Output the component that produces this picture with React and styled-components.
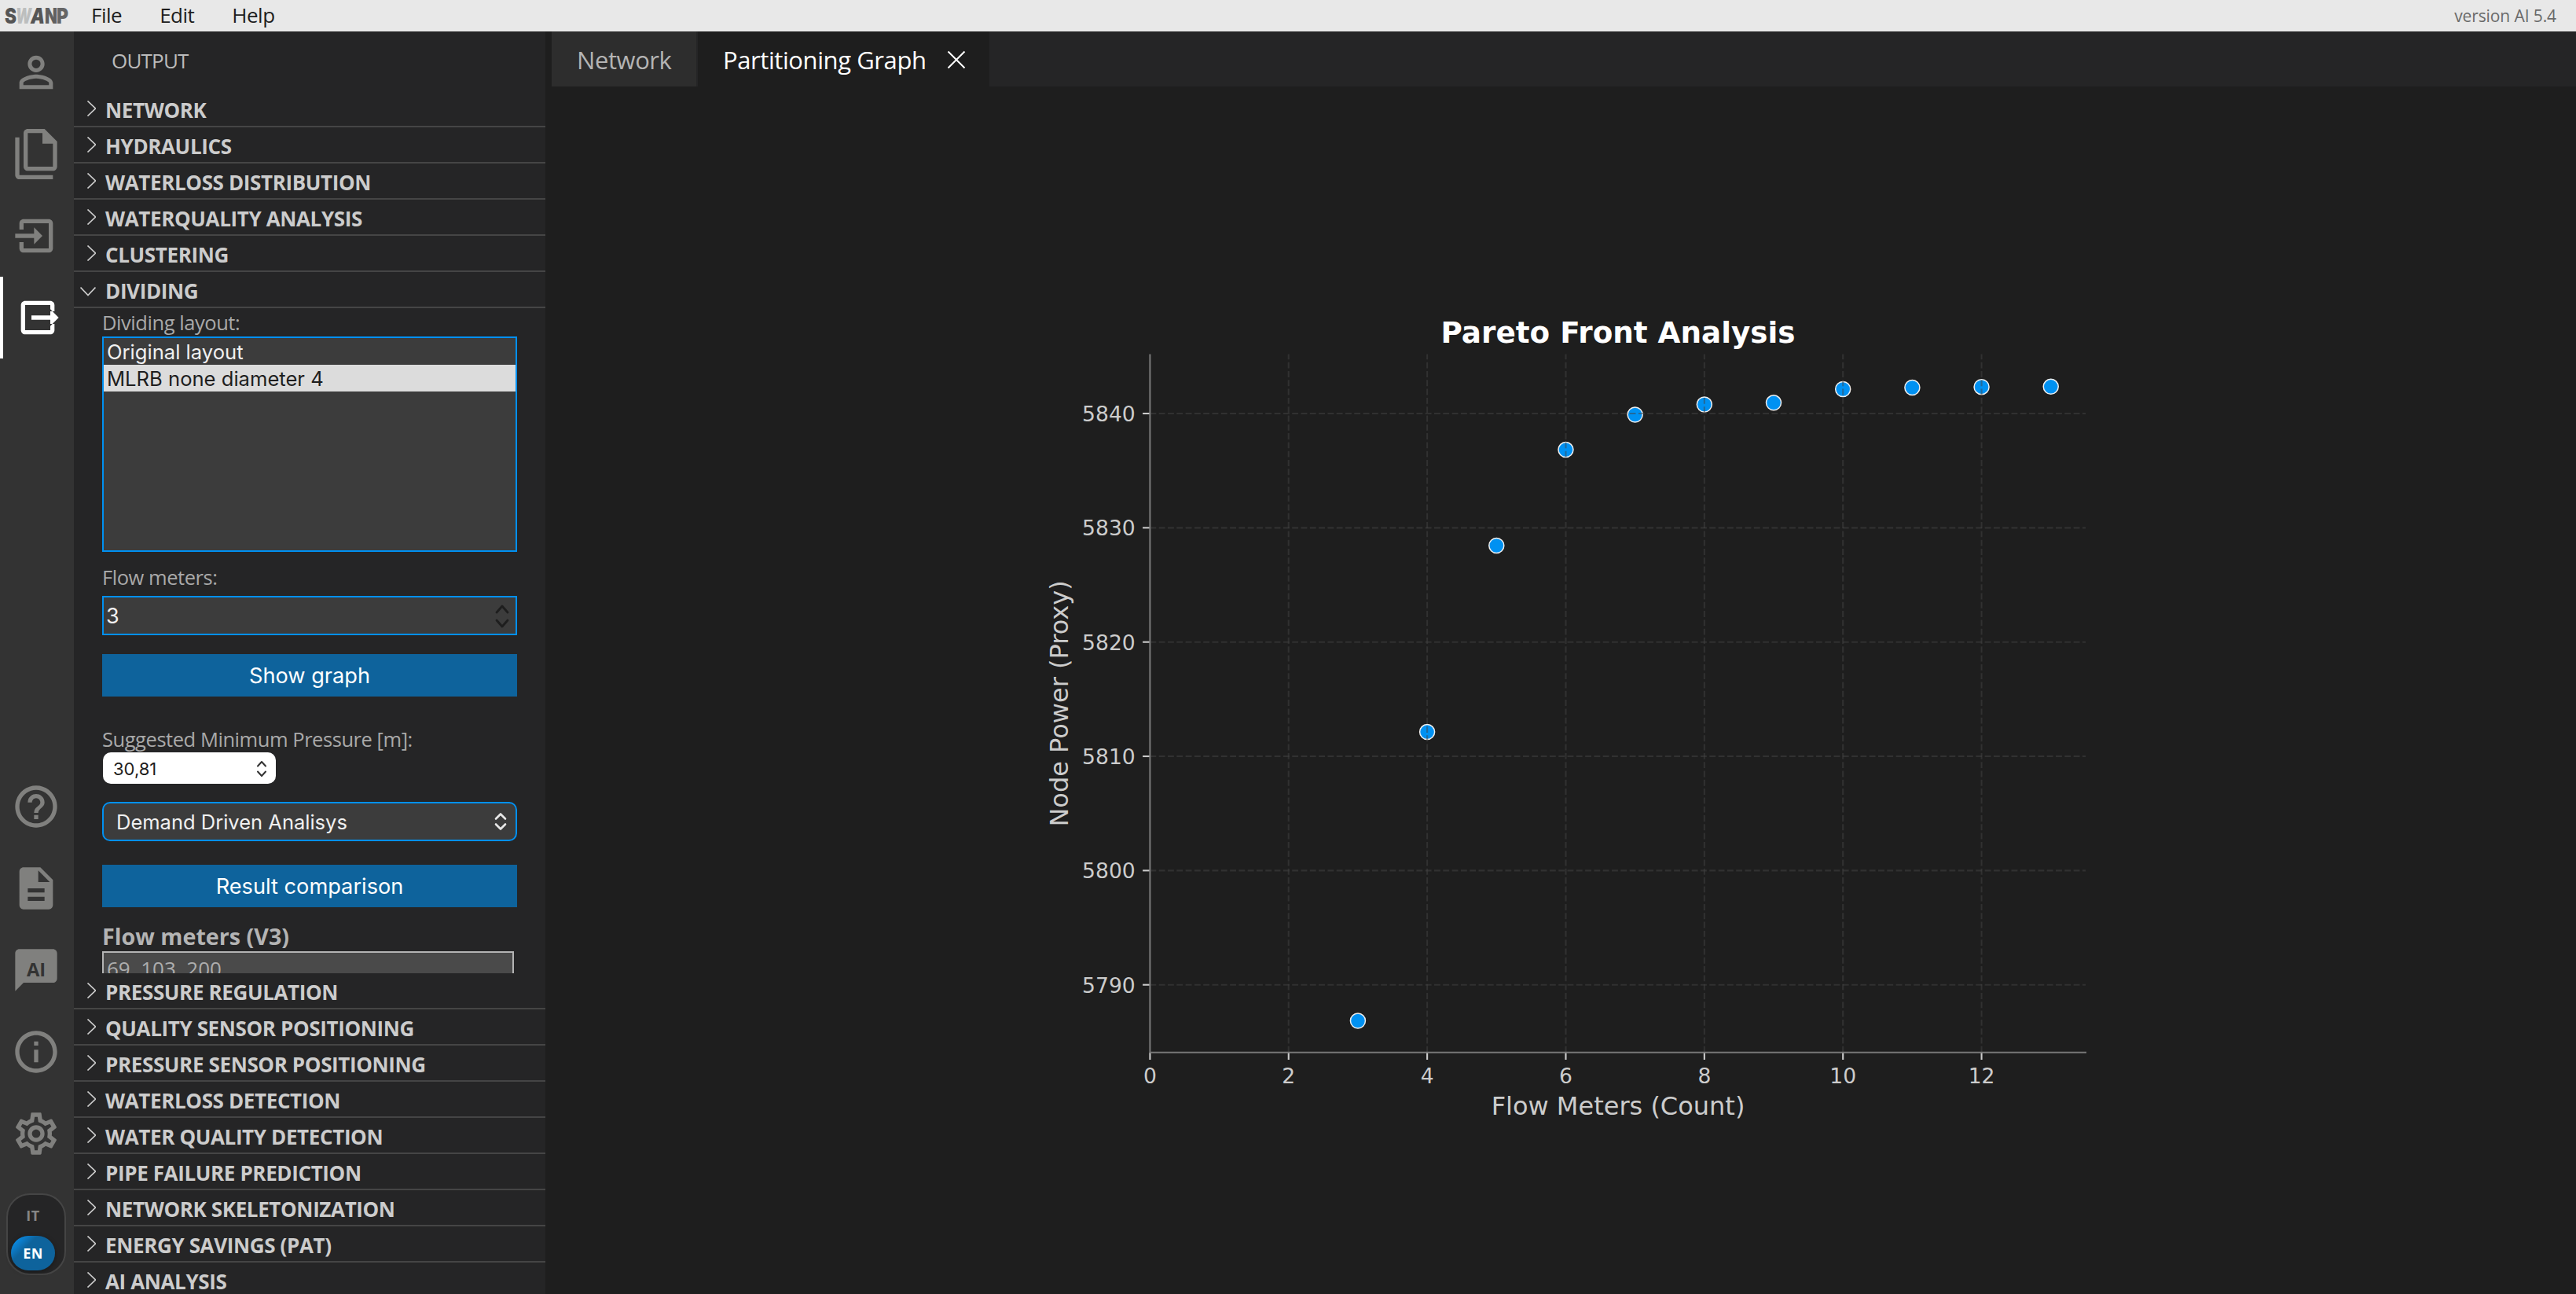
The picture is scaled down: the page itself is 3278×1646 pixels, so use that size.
import React, { useState } from "react";
import styled, { createGlobalStyle, css } from "styled-components";

const UI_FONT = `"Open Sans", "Noto Sans", sans-serif`;
const SYSTEM_FONT = `Inter, "Liberation Sans", sans-serif`;

const GlobalStyle = createGlobalStyle`
  * {
    box-sizing: border-box;
  }

  body {
    margin: 0;
    overflow: hidden;
    background: #1e1e1e;
    font-family: ${UI_FONT};
    font-size: 26px;
    color: #cccccc;
  }
`;

const Page = styled.div`
  display: flex;
  flex-direction: column;
  height: 100vh;
`;

const MenuBar = styled.header`
  display: flex;
  align-items: center;
  flex: none;
  height: 40px;
  padding: 0 25px 0 6px;
  background: #e8e8e8;
  color: #1e1e1e;
`;

const Menu = styled.nav`
  display: flex;
  gap: 48px;
  margin-left: 28px;
  padding-bottom: 2px;
  line-height: 38px;
  letter-spacing: -0.5px;
`;

const Version = styled.span`
  margin-left: auto;
  padding-bottom: 1px;
  font-size: 21px;
  line-height: 38px;
  letter-spacing: -0.1px;
  color: #6a6a6a;
`;

const LogoSvg = styled.svg`
  flex: none;
  width: 82px;
  height: 36px;
  overflow: visible;
  font-family: ${SYSTEM_FONT};
  font-size: 27px;
  font-weight: 900;
`;

const Body = styled.div`
  display: flex;
  flex: 1;
  min-height: 0;
`;

const ActivityBar = styled.aside`
  display: flex;
  flex-direction: column;
  justify-content: space-between;
  width: 94px;
  background: #333333;
`;

const ActivityItem = styled.div`
  display: flex;
  align-items: center;
  justify-content: center;
  height: 104px;
  padding-right: 2px;
  color: #80807e;

  svg {
    width: 64px;
    height: 64px;
    fill: currentColor;
  }

  text {
    fill: #333333;
    font-size: 8.9px;
    font-weight: 700;
    text-anchor: middle;
  }

  ${({ $active }) =>
    $active &&
    css`
      color: #fff;
      border-left: 4px solid #fff;
    `}
`;

const LangSwitch = styled.div`
  display: flex;
  flex-direction: column;
  justify-content: space-between;
  width: 76px;
  height: 104px;
  margin: 24px 0 24px 8px;
  padding: 4px 12px 4px 4px;
  border: 2px solid #454545;
  border-radius: 30px;
  background: #252526;
`;

const Lang = styled.span`
  height: 44px;
  border-radius: 22px;
  font-size: 18px;
  font-weight: 700;
  line-height: 45px;
  letter-spacing: 0.5px;
  text-align: center;
  color: #858585;

  ${({ $active }) =>
    $active &&
    css`
      background: linear-gradient(135deg, #0a90ee 8%, #0e639c 34%);
      box-shadow: 0 2px 6px rgba(0, 0, 0, 0.35);
      color: #fff;
    `}
`;

const SideBar = styled.section`
  display: flex;
  flex-direction: column;
  width: 600px;
  overflow: hidden;
  background: #252526;
`;

const SideTitle = styled.div`
  flex: none;
  height: 76px;
  padding-left: 48px;
  line-height: 75px;
  letter-spacing: -0.8px;
  color: #bbbbbb;
`;

const SectionHeader = styled.div`
  display: flex;
  align-items: center;
  flex: none;
  height: 46px;
  padding: 3px 0 0 8px;
  border-bottom: 2px solid #454545;
  font-weight: 700;
  white-space: nowrap;
  letter-spacing: -0.37px;

  svg {
    width: 20px;
    height: 20px;
    margin: 0 12px 3px 0;
    fill: none;
    stroke: #cccccc;
    stroke-width: 1.7;
  }
`;

const SectionBody = styled.div`
  display: flex;
  flex-direction: column;
  flex: none;
  height: 846px;
  padding: 0 36px;
  overflow: hidden;
`;

const Label = styled.label`
  flex: none;
  height: 36px;
  margin-top: ${({ $top }) => $top || 0}px;
  font-size: 25.5px;
  line-height: 36px;
  letter-spacing: -0.45px;
  color: #a9a9a9;
`;

const field = css`
  flex: none;
  border: 2px solid #0090f1;
  background: #3c3c3c;
  color: #f0f0f0;
  font-family: ${SYSTEM_FONT};
`;

const ListBox = styled.div`
  ${field}
  height: 274px;
`;

const Option = styled.div`
  height: 34px;
  padding-left: 4px;
  line-height: 35px;
  font-size: 25.6px;
  cursor: pointer;
  background: ${({ $selected }) => ($selected ? "#dcdcdc" : "transparent")};
  color: ${({ $selected }) => ($selected ? "#1e1e1e" : "#f0f0f0")};
`;

const NumberField = styled.div`
  ${field}
  display: flex;
  align-items: center;
  justify-content: space-between;
  height: 50px;
  margin-top: 6px;
  padding: 1px 7px 0 3px;
  font-size: 27px;
`;

const PressureField = styled.div`
  display: flex;
  align-items: center;
  justify-content: space-between;
  flex: none;
  width: 220px;
  height: 40px;
  margin: -1px 0 0 1px;
  padding: 1px 8px 0 13px;
  border-radius: 10px;
  background: #fff;
  color: #1e1e1e;
  font-family: ${SYSTEM_FONT};
  font-size: 22px;
`;

const SelectField = styled.div`
  ${field}
  display: flex;
  align-items: center;
  justify-content: space-between;
  height: 50px;
  margin-top: 23px;
  padding: 0 10px 0 16px;
  border-radius: 10px;
  font-size: 25.5px;
`;

const Spinner = styled.svg`
  flex: none;
  fill: none;
  stroke: ${({ $color }) => $color};
  stroke-width: ${({ $weight }) => $weight};
  stroke-linecap: round;
  stroke-linejoin: round;
`;

const Button = styled.button`
  flex: none;
  height: 54px;
  margin-top: ${({ $top }) => $top}px;
  padding: 0;
  border: none;
  background: #0e639c;
  color: #fff;
  font-family: ${SYSTEM_FONT};
  font-size: 27.2px;
  cursor: pointer;
`;

const Heading = styled.h4`
  flex: none;
  height: 38px;
  margin: 18px 0 0;
  font-size: 28.7px;
  line-height: 38px;
  color: #b4b4b4;
`;

const MetersBox = styled.div`
  flex: none;
  height: 90px;
  margin-right: 4px;
  padding: 2px 4px;
  border: 2px solid #b4b4b4;
  background: #4a4a4a;
  line-height: 36px;
  color: #adadad;
`;

const Main = styled.main`
  display: flex;
  flex-direction: column;
  flex: 1;
  padding-left: 8px;
`;

const Tabs = styled.div`
  display: flex;
  flex: none;
  height: 70px;
  background: #252526;
`;

const Tab = styled.div`
  display: flex;
  align-items: center;
  width: ${({ $width }) => $width}px;
  padding: 1px 0 0 32px;
  border-right: 2px solid #252526;
  font-size: 31px;
  letter-spacing: -0.42px;
  white-space: nowrap;
  background: ${({ $active }) => ($active ? "#1e1e1e" : "#2d2d2d")};
  color: ${({ $active }) => ($active ? "#fff" : "#b4b4b4")};

  svg {
    margin-left: auto;
    margin-right: 30px;
    fill: none;
    stroke: #fff;
    stroke-width: 2;
  }
`;

const Chart = styled.svg`
  display: block;
  width: 2576px;
  height: 1536px;
  font-family: "DejaVu Sans", sans-serif;
`;

const topIcons = [
  {
    id: "user",
    d: "M12 5.9a2.1 2.1 0 1 1 0 4.2 2.1 2.1 0 0 1 0-4.2m0 9c2.97 0 6.1 1.46 6.1 2.1v1.1H5.9V17c0-.64 3.13-2.1 6.1-2.1M12 4C9.79 4 8 5.79 8 8s1.79 4 4 4 4-1.79 4-4-1.79-4-4-4zm0 9c-2.67 0-8 1.34-8 4v3h16v-3c0-2.66-5.33-4-8-4z",
  },
  {
    id: "files",
    d: "M16 0H8C6.9 0 6 .9 6 2v16c0 1.1.9 2 2 2h12c1.1 0 2-.9 2-2V6l-6-6m4 18H8V2h7v5h5v11M4 4v18h16v2H4c-1.1 0-2-.9-2-2V4h2z",
  },
  {
    id: "input",
    d: "M15 12l-4-4v3H2v2h9v3M20 18V6c0-1.1-.9-2-2-2H6c-1.1 0-2 .9-2 2v3h2V6h12v12H6v-3H4v3c0 1.1.9 2 2 2h12c1.1 0 2-.9 2-2z",
  },
  {
    id: "output",
    active: true,
    d: "M22 12l-4-4v3H9v2h9v3M20 18c0 1.1-.9 2-2 2H6c-1.1 0-2-.9-2-2V6c0-1.1.9-2 2-2h12c1.1 0 2 .9 2 2v3h-2V6H6v12h12v-3h2v3z",
  },
];

const bottomIcons = [
  {
    id: "help",
    d: "M11 18h2v-2h-2v2zm1-16C6.48 2 2 6.48 2 12s4.48 10 10 10 10-4.48 10-10S17.52 2 12 2zm0 18c-4.41 0-8-3.59-8-8s3.59-8 8-8 8 3.59 8 8-3.59 8-8 8zm0-14c-2.21 0-4 1.79-4 4h2c0-1.1.9-2 2-2s2 .9 2 2c0 2-3 1.75-3 5h2c0-2.25 3-2.5 3-5 0-2.21-1.79-4-4-4z",
  },
  {
    id: "document",
    d: "M14 2H6c-1.1 0-2 .9-2 2v16c0 1.1.9 2 2 2h12c1.1 0 2-.9 2-2V8l-6-6zm2 16H8v-2h8v2zm0-4H8v-2h8v2zm-3-5V3.5L18.5 9H13z",
  },
  {
    id: "ai",
    label: "AI",
    d: "M20 2H4c-1.1 0-2 .9-2 2v18l4-4h14c1.1 0 2-.9 2-2V4c0-1.1-.9-2-2-2z",
  },
  {
    id: "info",
    d: "M11 7h2v2h-2zm0 4h2v6h-2zm1-9C6.48 2 2 6.48 2 12s4.48 10 10 10 10-4.48 10-10S17.52 2 12 2zm0 18c-4.41 0-8-3.59-8-8s3.59-8 8-8 8 3.59 8 8-3.59 8-8 8z",
  },
  {
    id: "settings",
    d: "M19.43 12.98c.04-.32.07-.64.07-.98 0-.34-.03-.66-.07-.98l2.11-1.65c.19-.15.24-.42.12-.64l-2-3.46c-.09-.16-.26-.25-.44-.25-.06 0-.12.01-.17.03l-2.49 1c-.52-.4-1.08-.73-1.69-.98l-.38-2.65C14.46 2.18 14.25 2 14 2h-4c-.25 0-.46.18-.49.42l-.38 2.65c-.61.25-1.17.59-1.69.98l-2.49-1c-.06-.02-.12-.03-.18-.03-.17 0-.34.09-.43.25l-2 3.46c-.13.22-.07.49.12.64l2.11 1.65c-.04.32-.07.65-.07.98 0 .33.03.66.07.98l-2.11 1.65c-.19.15-.24.42-.12.64l2 3.46c.09.16.26.25.44.25.06 0 .12-.01.17-.03l2.49-1c.52.4 1.08.73 1.69.98l.38 2.65c.03.24.24.42.49.42h4c.25 0 .46-.18.49-.42l.38-2.65c.61-.25 1.17-.59 1.69-.98l2.49 1c.06.02.12.03.18.03.17 0 .34-.09.43-.25l2-3.46c.12-.22.07-.49-.12-.64l-2.11-1.65zm-1.98-1.71c.04.31.05.52.05.73 0 .21-.02.43-.05.73l-.14 1.13.89.7 1.08.84-.7 1.21-1.27-.51-1.04-.42-.9.68c-.43.32-.84.56-1.25.73l-1.06.43-.16 1.13-.2 1.35h-1.4l-.19-1.35-.16-1.13-1.06-.43c-.43-.18-.83-.41-1.23-.71l-.91-.7-1.06.43-1.27.51-.7-1.21 1.08-.84.89-.7-.14-1.13c-.03-.31-.05-.54-.05-.74s.02-.43.05-.73l.14-1.13-.89-.7-1.08-.84.7-1.21 1.27.51 1.04.42.9-.68c.43-.32.84-.56 1.25-.73l1.06-.43.16-1.13.2-1.35h1.39l.19 1.35.16 1.13 1.06.43c.43.18.83.41 1.23.71l.91.7 1.06-.43 1.27-.51.7 1.21-1.07.85-.89.7.14 1.13zM12 8c-2.21 0-4 1.79-4 4s1.79 4 4 4 4-1.79 4-4-1.79-4-4-4zm0 6c-1.1 0-2-.9-2-2s.9-2 2-2 2 .9 2 2-.9 2-2 2z",
  },
];

const sectionsAbove = ["NETWORK", "HYDRAULICS", "WATERLOSS DISTRIBUTION", "WATERQUALITY ANALYSIS", "CLUSTERING"];

const sectionsBelow = [
  "PRESSURE REGULATION",
  "QUALITY SENSOR POSITIONING",
  "PRESSURE SENSOR POSITIONING",
  "WATERLOSS DETECTION",
  "WATER QUALITY DETECTION",
  "PIPE FAILURE PREDICTION",
  "NETWORK SKELETONIZATION",
  "ENERGY SAVINGS (PAT)",
  "AI ANALYSIS",
];

const layouts = ["Original layout", "MLRB none diameter 4"];

// [flow meters, node power]
const pareto = [
  [3, 5786.85],
  [4, 5812.13],
  [5, 5828.44],
  [6, 5836.83],
  [7, 5839.9],
  [8, 5840.79],
  [9, 5840.94],
  [10, 5842.13],
  [11, 5842.27],
  [12, 5842.33],
  [13, 5842.35],
];

const xTicks = [0, 2, 4, 6, 8, 10, 12];
const yTicks = [5790, 5800, 5810, 5820, 5830, 5840];

const LEFT = 761.4;
const RIGHT = 1952;
const TOP = 340.5;
const BOTTOM = 1228.7;

const xPos = (v) => LEFT + v * 88.18;
const yPos = (v) => 416 + (5840 - v) * 14.534;

const ActivityIcon = ({ icon }) => (
  <ActivityItem $active={icon.active}>
    <svg viewBox="0 0 24 24">
      <path d={icon.d} />
      {icon.label && (
        <text x="12" y="15.1">
          {icon.label}
        </text>
      )}
    </svg>
  </ActivityItem>
);

const Section = ({ title, open }) => (
  <SectionHeader>
    <svg viewBox="0 0 20 20">
      <path d={open ? "M0.5 7.5L10 17.5L19.5 7.5" : "M9.5 0.5L19.5 10L9.5 19.5"} />
    </svg>
    {title}
  </SectionHeader>
);

const logoLetters = [
  { char: "S", x: 0, width: 15, fill: "#555" },
  { char: "W", x: 14, width: 20, fill: "#bcbebe", italic: true },
  { char: "A", x: 33, width: 18, fill: "#555", italic: true },
  { char: "N", x: 51, width: 16, fill: "#606060" },
  { char: "P", x: 66, width: 15, fill: "#666" },
];

const Logo = () => (
  <LogoSvg viewBox="0 0 82 36">
    {logoLetters.map(({ char, x, width, fill, italic }) => (
      <text
        key={char}
        x={x}
        y="27.5"
        textLength={width}
        lengthAdjust="spacingAndGlyphs"
        fill={fill}
        fontStyle={italic ? "italic" : "normal"}
      >
        {char}
      </text>
    ))}
  </LogoSvg>
);

const ParetoChart = () => (
  <Chart viewBox="0 0 2576 1536">
    {pareto.map(([x, y]) => (
      <circle key={x} cx={xPos(x)} cy={yPos(y)} r="9.5" fill="#0091f2" stroke="#f0f0f0" strokeWidth="1.5" />
    ))}

    <g stroke="#444" strokeOpacity="0.5" strokeWidth="2.1" strokeDasharray="7.9 3.4">
      {xTicks.slice(1).map((t) => (
        <line key={t} x1={xPos(t)} x2={xPos(t)} y1={BOTTOM} y2={TOP} />
      ))}
      {yTicks.map((t) => (
        <line key={t} x1={LEFT} x2={RIGHT} y1={yPos(t)} y2={yPos(t)} />
      ))}
    </g>

    <g stroke="#ccc" strokeWidth="2.1">
      {xTicks.map((t) => (
        <line key={t} x1={xPos(t)} x2={xPos(t)} y1={BOTTOM} y2={BOTTOM + 9.3} />
      ))}
      {yTicks.map((t) => (
        <line key={t} x1={LEFT - 9.3} x2={LEFT} y1={yPos(t)} y2={yPos(t)} />
      ))}
    </g>

    <path d={`M${LEFT} ${TOP}V${BOTTOM}H${RIGHT + 1}`} fill="none" stroke="#777" strokeWidth="2.1" />

    <g fill="#ccc" fontSize="26.6">
      {xTicks.map((t) => (
        <text key={t} x={xPos(t)} y="1267.7" textAnchor="middle">
          {t}
        </text>
      ))}
      {yTicks.map((t) => (
        <text key={t} x={LEFT - 18.6} y={yPos(t) + 10} textAnchor="end">
          {t}
        </text>
      ))}
    </g>

    <g fill="#ccc" fontSize="32" textAnchor="middle">
      <text x="1357" y="1307.7">
        Flow Meters (Count)
      </text>
      <text transform="translate(657.3 785) rotate(-90)">Node Power (Proxy)</text>
    </g>
    <text x="1357" y="325.5" fill="#fff" fontSize="37.3" fontWeight="700" textAnchor="middle">
      Pareto Front Analysis
    </text>
  </Chart>
);

const App = () => {
  const [layout, setLayout] = useState(layouts[1]);

  return (
    <>
      <GlobalStyle />
      <Page>
        <MenuBar>
          <Logo />
          <Menu>
            <span>File</span>
            <span>Edit</span>
            <span>Help</span>
          </Menu>
          <Version>version AI 5.4</Version>
        </MenuBar>

        <Body>
          <ActivityBar>
            <div>
              {topIcons.map((icon) => (
                <ActivityIcon key={icon.id} icon={icon} />
              ))}
            </div>
            <div>
              {bottomIcons.map((icon) => (
                <ActivityIcon key={icon.id} icon={icon} />
              ))}
              <LangSwitch>
                <Lang>IT</Lang>
                <Lang $active>EN</Lang>
              </LangSwitch>
            </div>
          </ActivityBar>

          <SideBar>
            <SideTitle>OUTPUT</SideTitle>
            {sectionsAbove.map((title) => (
              <Section key={title} title={title} />
            ))}
            <Section title="DIVIDING" open />
            <SectionBody>
              <Label>Dividing layout:</Label>
              <ListBox>
                {layouts.map((name) => (
                  <Option key={name} $selected={name === layout} onClick={() => setLayout(name)}>
                    {name}
                  </Option>
                ))}
              </ListBox>

              <Label $top={14}>Flow meters:</Label>
              <NumberField>
                3
                <Spinner $color="#1e1e1e" $weight={2.8} width="20" height="32" viewBox="0 0 20 32">
                  <path d="M3 11L10 3L17 11M3 21L10 29L17 21" />
                </Spinner>
              </NumberField>
              <Button $top={24}>Show graph</Button>

              <Label $top={36}>Suggested Minimum Pressure [m]:</Label>
              <PressureField>
                30,81
                <Spinner $color="#333" $weight={2} width="20" height="24" viewBox="0 0 20 24">
                  <path d="M5 8.5L10 3L15 8.5M5 15.5L10 21L15 15.5" />
                </Spinner>
              </PressureField>
              <SelectField>
                Demand Driven Analisys
                <Spinner $color="#e8e8e8" $weight={2.6} width="18" height="24" viewBox="0 0 18 24">
                  <path d="M3 8.5L9 2.5L15 8.5M3 15.5L9 21.5L15 15.5" />
                </Spinner>
              </SelectField>
              <Button $top={30}>Result comparison</Button>

              <Heading>Flow meters (V3)</Heading>
              <MetersBox>69, 103, 200</MetersBox>
            </SectionBody>
            {sectionsBelow.map((title) => (
              <Section key={title} title={title} />
            ))}
          </SideBar>

          <Main>
            <Tabs>
              <Tab $width={186}>Network</Tab>
              <Tab $width={373} $active>
                Partitioning Graph
                <svg width="24" height="24" viewBox="0 0 24 24">
                  <path d="M1.5 1.5L22.5 22.5M22.5 1.5L1.5 22.5" />
                </svg>
              </Tab>
            </Tabs>
            <ParetoChart />
          </Main>
        </Body>
      </Page>
    </>
  );
};

export default App;
